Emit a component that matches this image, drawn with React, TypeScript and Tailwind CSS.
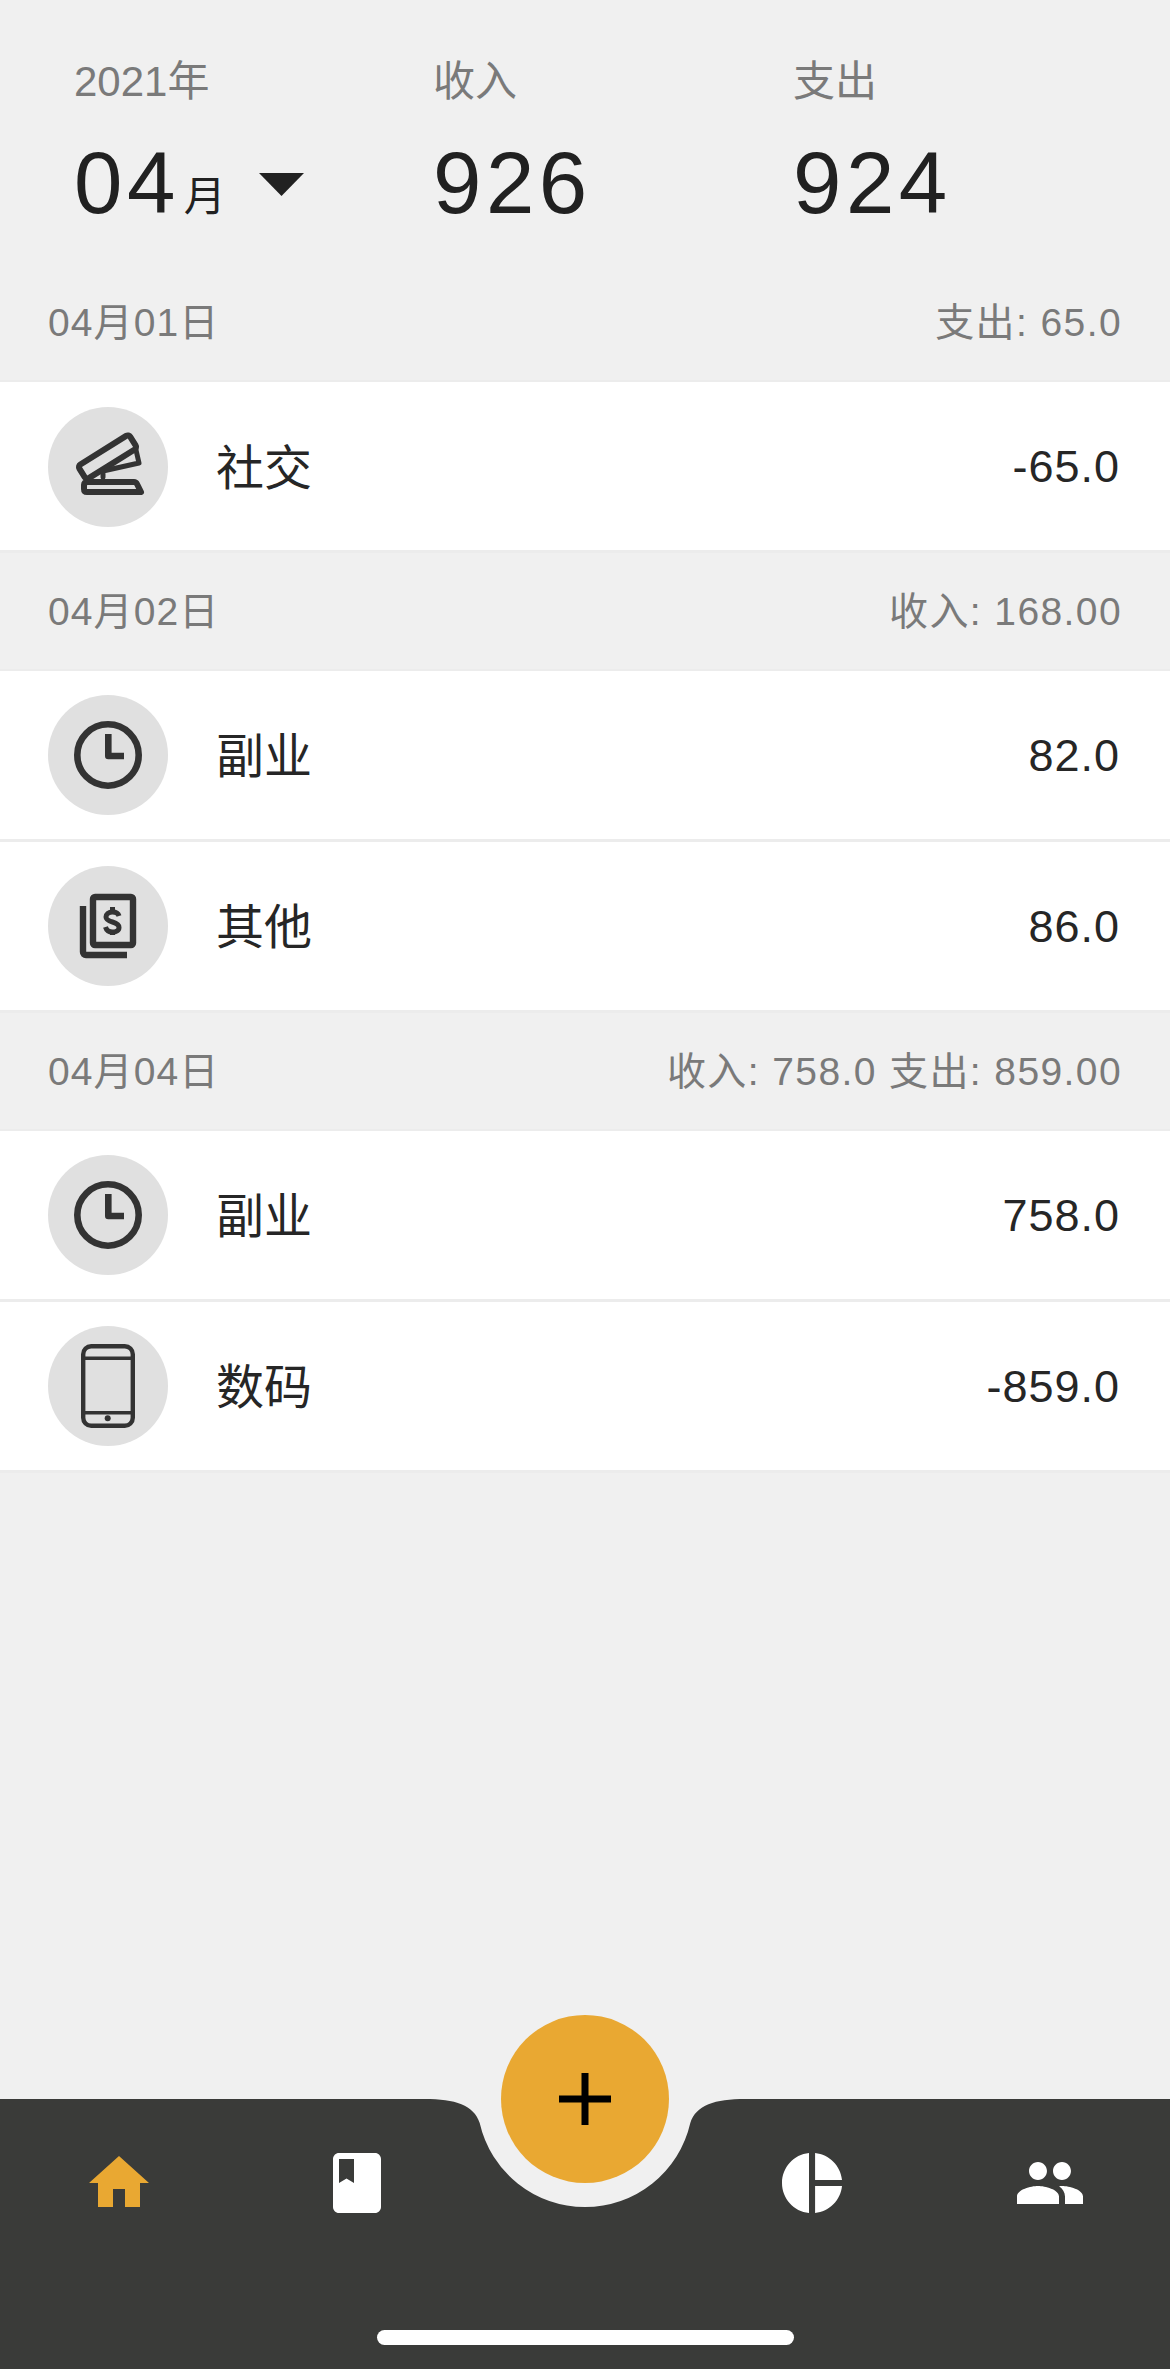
const Clock = () => (
  <svg viewBox="0 0 120 120" className="h-full w-full" fill="none" stroke="#333333">
    <circle cx="60" cy="60" r="30.7" strokeWidth="6.6" />
    <path d="M60.3 39V61H76" strokeWidth="6.6" strokeLinejoin="round" />
  </svg>
);
const Money = () => (
  <svg viewBox="0 0 120 120" className="h-full w-full" fill="none" stroke="#333333">
    <rect x="45" y="31" width="40" height="48" rx="2" strokeWidth="6.4" />
    <path d="M35 40V86a3 3 0 0 0 3 3H79" strokeWidth="6.4" />
    <path d="M71 50C70 46.5 67 46 64.5 46C60.5 46 58 48 58 51C58 54 61 55 64.5 56C68 57 71 58.5 71 61.5C71 64.5 68 66 64.5 66C61 66 58.5 64.5 57.5 61" strokeWidth="5" />
    <path d="M64.5 41V46M64.5 66V69" strokeWidth="5" />
  </svg>
);
const Phone = () => (
  <svg viewBox="0 0 120 120" className="h-full w-full" fill="none" stroke="#333333">
    <rect x="35.2" y="20.2" width="49.6" height="79.6" rx="8" strokeWidth="4.4" />
    <path d="M35 32.3H85M35 86.7H85" strokeWidth="3.6" />
    <circle cx="59.7" cy="92.3" r="3" fill="#333333" stroke="none" />
  </svg>
);
const Stapler = () => (
  <svg viewBox="0 0 120 120" className="h-full w-full" fill="none" stroke="#333333" strokeWidth="6" strokeLinejoin="round" strokeLinecap="round">
    <rect x="29.5" y="42" width="60" height="16" rx="3" transform="rotate(-32 59.5 50)" />
    <path d="M88 43L91 56L55 64V70" strokeWidth="5" />
    <path d="M40 75H86Q88 75 89 77L93 85H39Q36 85 36 82V78Q36 75 40 75Z" />
  </svg>
);

function Row({ icon, label, amount, shifted }: { icon: React.ReactNode; label: string; amount: string; shifted?: boolean }) {
  return (
    <div className="box-content flex h-[168px] items-center justify-between border-b-[3px] border-[#ececec] bg-white pl-[48px] pr-[50px]">
      <div className={shifted ? "flex items-center pt-[2px]" : "flex items-center"}>
        <div className="h-[120px] w-[120px] rounded-full bg-[#e0e0e0]">{icon}</div>
        <span className="ml-[48px] pt-[4px] text-[48px] leading-none text-[#262626]">{label}</span>
      </div>
      <span className="text-[45px] leading-none tracking-[1px] text-[#262626]">{amount}</span>
    </div>
  );
}

function DayHeader({ date, summary }: { date: string; summary: string }) {
  return (
    <div className="flex h-[118px] items-center justify-between border-b-2 border-[#ececec] px-[48px] pt-[1px] text-[39px] leading-none text-[#7a7a7a]">
      <span className="tracking-[1.1px]">{date}</span>
      <span className="tracking-[1.4px]">{summary}</span>
    </div>
  );
}

function Tab({ path, color }: { path: string; color: string }) {
  return (
    <svg viewBox="0 0 24 24" className="h-[72px] w-[72px]" fill={color}>
      <path d={path} />
    </svg>
  );
}

export default function App() {
  return (
    <div
      className="relative flex h-[2369px] w-[1170px] flex-col overflow-hidden bg-[#f0f0f0]"
      style={{ fontFamily: '"Liberation Sans", "Noto Sans CJK SC", sans-serif' }}
    >
      <header className="flex h-[264px] pl-[72px] pt-[58px]">
        <div className="w-[360px] pl-[2px]">
          <div className="text-[42px] leading-[48px] text-[#7a7a7a]">2021年</div>
          <div className="mt-[27px] flex items-baseline text-[#212121]">
            <span className="text-[87px] leading-[100px] tracking-[4.5px]">04</span>
            <span className="relative -top-[2px] ml-[4px] text-[42px] leading-none">月</span>
            <svg viewBox="0 0 45 23" className="relative top-[1px] ml-[33px] h-[23px] w-[45px] self-center">
              <path d="M0 0H45L22.5 23Z" fill="#212121" />
            </svg>
          </div>
        </div>
        <div className="w-[360px] pl-[1px]">
          <div className="text-[42px] leading-[48px] text-[#7a7a7a]">收入</div>
          <div className="mt-[27px] text-[87px] leading-[100px] tracking-[4.5px] text-[#212121]">926</div>
        </div>
        <div className="w-[360px] pl-[1px]">
          <div className="text-[42px] leading-[48px] text-[#7a7a7a]">支出</div>
          <div className="mt-[27px] text-[87px] leading-[100px] tracking-[4.5px] text-[#212121]">924</div>
        </div>
      </header>

      <DayHeader date="04月01日" summary="支出: 65.0" />
      <Row icon={<Stapler />} label="社交" amount="-65.0" shifted />
      <DayHeader date="04月02日" summary="收入: 168.00" />
      <Row icon={<Clock />} label="副业" amount="82.0" />
      <Row icon={<Money />} label="其他" amount="86.0" />
      <DayHeader date="04月04日" summary="收入: 758.0 支出: 859.00" />
      <Row icon={<Clock />} label="副业" amount="758.0" />
      <Row icon={<Phone />} label="数码" amount="-859.0" />

      <nav className="absolute bottom-0 left-0 h-[270px] w-full bg-[#3a3b39]">
        <svg viewBox="0 0 1170 110" className="absolute left-0 top-0 h-[110px] w-[1170px]">
          <path d="M425 0C455 0 474 6 479.7 24A108 108 0 0 0 690.3 24C696 6 715 0 745 0Z" fill="#f0f0f0" />
        </svg>
        <div className="flex justify-between pl-[83px] pr-[84px] pt-[48px]">
          <div className="relative flex gap-[166px]">
            <Tab color="#e9a832" path="M10 20v-6h4v6h5v-8h3L12 3 2 12h3v8z" />
            <Tab color="#ffffff" path="M18 2H6c-1.1 0-2 .9-2 2v16c0 1.1.9 2 2 2h12c1.1 0 2-.9 2-2V4c0-1.1-.9-2-2-2zM6 4h5v8l-2.5-1.5L6 12V4z" />
          </div>
          <div className="relative flex gap-[166px]">
            <Tab color="#ffffff" path="M11 2v20c-5.07-.5-9-4.79-9-10s3.93-9.5 9-10zm2.03 0v8.99H22c-.47-4.74-4.24-8.52-8.97-8.99zm0 11.01V22c4.74-.47 8.5-4.25 8.97-8.99h-8.97z" />
            <Tab color="#ffffff" path="M16 11c1.66 0 2.99-1.34 2.99-3S17.66 5 16 5c-1.66 0-3 1.34-3 3s1.34 3 3 3zm-8 0c1.66 0 2.99-1.34 2.99-3S9.66 5 8 5C6.34 5 5 6.34 5 8s1.34 3 3 3zm0 2c-2.33 0-7 1.17-7 3.5V19h14v-2.5c0-2.33-4.67-3.5-7-3.5zm8 0c-.29 0-.62.02-.97.05 1.16.84 1.97 1.97 1.97 3.45V19h6v-2.5c0-2.33-4.67-3.5-7-3.5z" />
          </div>
        </div>
        <div className="absolute bottom-[24px] left-[377px] h-[15px] w-[417px] rounded-full bg-white" />
      </nav>

      <button className="absolute left-[501px] top-[2015px] flex h-[168px] w-[168px] items-center justify-center rounded-full bg-[#e9a832]">
        <svg viewBox="0 0 52 52" className="h-[52px] w-[52px]">
          <path d="M0 26H52M26 0V52" stroke="#000000" strokeWidth="7" />
        </svg>
      </button>
    </div>
  );
}
